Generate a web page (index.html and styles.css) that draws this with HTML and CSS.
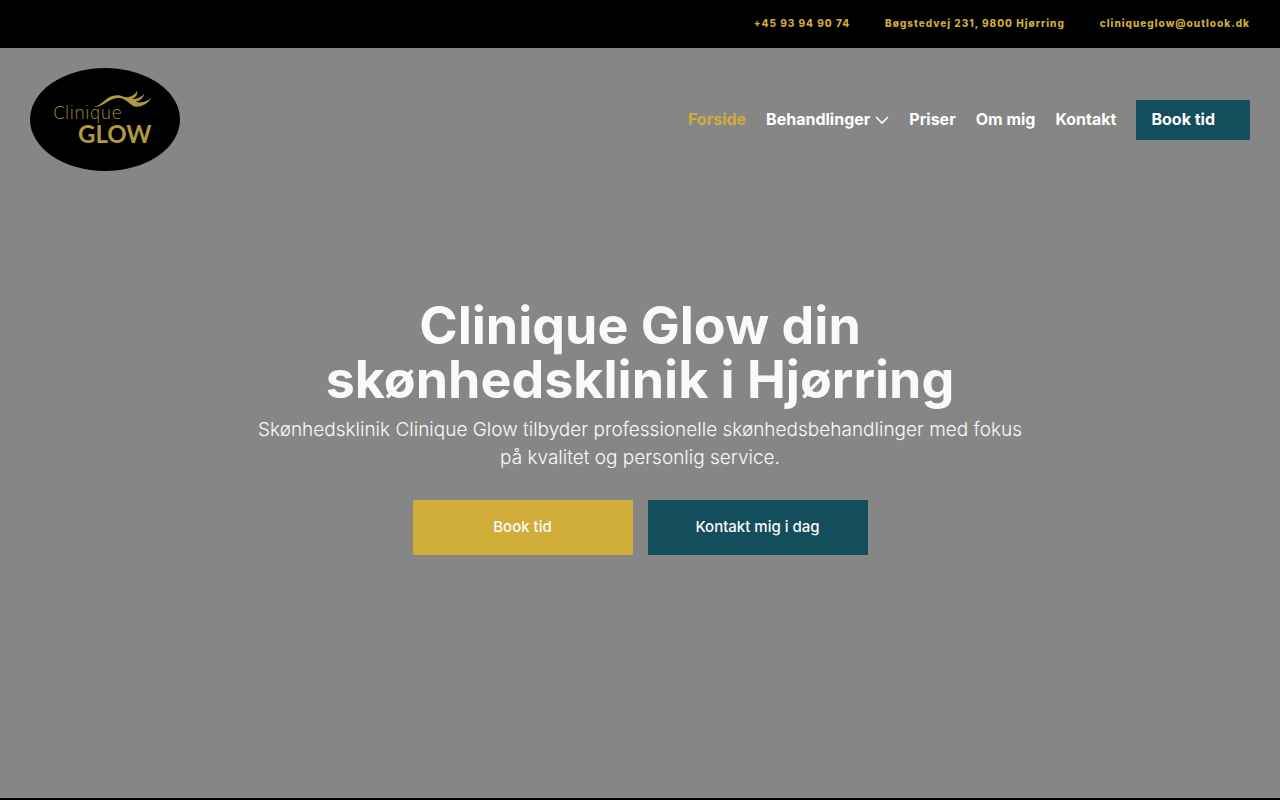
FILE: index.html
```html
<!DOCTYPE html>
<html lang="da">
<head>
<meta charset="utf-8">
<meta name="viewport" content="width=device-width, initial-scale=1">
<title>Clinique Glow</title>
<link rel="stylesheet" href="styles.css">
</head>
<body>
<div class="topbar">
  <a href="tel:+4593949074">+45 93 94 90 74</a>
  <a href="#adresse">Bøgstedvej 231, 9800 Hjørring</a>
  <a href="mailto:cliniqueglow@outlook.dk">cliniqueglow@outlook.dk</a>
</div>
<div class="hero">
  <header class="header">
    <a class="logo" href="#forside" aria-label="Clinique Glow">
      <svg viewBox="0 0 150 103" width="150" height="103">
        <ellipse cx="75" cy="51.5" rx="75" ry="51.5" fill="#000"/>
        <g fill="#b0983f">
          <text class="logo-thin" x="23" y="51">Clinique</text>
          <text class="logo-bold" x="48" y="75">GLOW</text>
          <path d="M64 39C73 37 76 27.200 87 27.200C92 27.200 94 29.500 97 29.300C102 28.500 106 26 107 22.500C108 27 105.500 29.500 102 31C107 31 112.500 29 114 25.500C114 29.500 110 32.500 106 34C112 35.500 118 33 121.500 29.500C119 35 112 39.500 104 38.500C100 36.500 97 32 91 30.300C80 28 75 39 64 39Z"/>
        </g>
      </svg>
    </a>
    <nav class="nav">
      <a class="active" href="#forside">Forside</a>
      <a class="has-menu" href="#behandlinger">Behandlinger
        <svg viewBox="0 0 14 8" width="14" height="8" fill="none" stroke="currentColor" stroke-width="1.600"><path d="M1 1L7 7L13 1"/></svg>
      </a>
      <a href="#priser">Priser</a>
      <a href="#om">Om mig</a>
      <a href="#kontakt">Kontakt</a>
      <a class="nav-book" href="#book">Book tid</a>
    </nav>
  </header>
  <main class="intro">
    <h1>Clinique Glow din skønhedsklinik i Hjørring</h1>
    <p>Skønhedsklinik Clinique Glow tilbyder professionelle skønhedsbehandlinger med fokus på kvalitet og personlig service.</p>
    <div class="actions">
      <a class="button gold" href="#book">Book tid</a>
      <a class="button teal" href="#kontakt">Kontakt mig i dag</a>
    </div>
  </main>
</div>
</body>
</html>
```
FILE: styles.css
```css
* { box-sizing: border-box; }
body {
  margin: 0;
  background: #000;
  color: #fff;
  font-family: "Inter", "Liberation Sans", sans-serif;
}
a { color: inherit; text-decoration: none; }
.topbar {
  display: flex;
  justify-content: flex-end;
  align-items: center;
  gap: 35px;
  min-height: 48px;
  padding: 0 30px 2px;
  color: #d0ad38;
  font-size: 10px;
  font-weight: 800;
  line-height: 16px;
  letter-spacing: 1px;
}
.hero {
  display: flex;
  flex-direction: column;
  min-height: calc(100vh - 50px);
  background: #868686;
}
.header {
  display: flex;
  justify-content: space-between;
  align-items: center;
  padding: 20px 30px;
}
.logo svg { display: block; }
.logo-thin { font-family: "DejaVu Sans", sans-serif; font-size: 17px; font-weight: 200; }
.logo-bold { font-family: "Lato", sans-serif; font-size: 24px; font-weight: 700; }
.nav {
  display: flex;
  align-items: center;
  gap: 20px;
  font-size: 16px;
  font-weight: 700;
  line-height: 20px;
}
.nav a { padding: 9px 0 11px; }
.active { color: #d0ad38; }
.has-menu { display: flex; align-items: center; gap: 5px; }
.has-menu svg { margin-top: 2px; }
.nav .nav-book {
  padding: 9px 35px 11px 15px;
  border-radius: 1px;
  background: #124e5c;
}
.intro {
  display: flex;
  flex-direction: column;
  align-items: center;
  padding: 108px 20px 0;
  text-align: center;
  color: #fafafa;
}
h1 {
  max-width: 780px;
  margin: 0;
  font-size: 52px;
  font-weight: 700;
  line-height: 54px;
}
p {
  max-width: 780px;
  margin: 9px 0 28px;
  font-size: 19px;
  font-weight: 300;
  line-height: 28px;
  color: #fafafa;
}
.actions { display: flex; flex-wrap: wrap; justify-content: center; gap: 15px; }
.button {
  width: 220px;
  padding: 17px 10px 18px;
  font-size: 15px;
  font-weight: 500;
  line-height: 20px;
}
.gold { background: #d0ad38; }
.teal { background: #144e5c; }
```
